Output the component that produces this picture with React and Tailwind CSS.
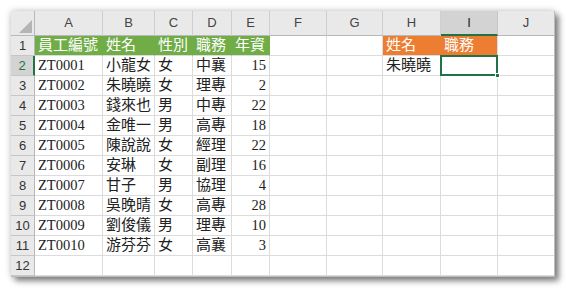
import React from "react";

const cols = ["A", "B", "C", "D", "E", "F", "G", "H", "I", "J"];

const rows = [
  ["ZT0001", "小龍女", "女", "中襄", "15"],
  ["ZT0002", "朱曉曉", "女", "理專", "2"],
  ["ZT0003", "錢來也", "男", "中專", "22"],
  ["ZT0004", "金唯一", "男", "高專", "18"],
  ["ZT0005", "陳說說", "女", "經理", "22"],
  ["ZT0006", "安琳", "女", "副理", "16"],
  ["ZT0007", "甘子", "男", "協理", "4"],
  ["ZT0008", "吳晚晴", "女", "高專", "28"],
  ["ZT0009", "劉俊儀", "男", "理專", "10"],
  ["ZT0010", "游芬芬", "女", "高襄", "3"],
];

const cellFont = { fontFamily: '"Liberation Serif", "Noto Sans CJK TC", serif' };
const uiFont = { fontFamily: '"Liberation Sans", "Noto Sans", sans-serif' };

function Cell({ children, cjk, className = "" }) {
  return (
    <div
      className={`h-[20px] border-r border-b border-[#dcdcdc] flex items-end pb-[1px] px-[3px] ${
        cjk ? "text-[15px]" : "text-[14.5px]"
      } leading-[18px] text-[#222] whitespace-nowrap overflow-hidden ${className}`}
      style={cellFont}
    >
      {children}
    </div>
  );
}

function RowHead({ n, active }) {
  return (
    <div
      className={`h-[20px] border-b flex items-center justify-center text-[13px] ${
        active
          ? "bg-[#d3d3d3] border-[#c6c6c6] border-r-2 border-r-[#217346] text-[#217346]"
          : "bg-[#e9e9e9] border-[#c6c6c6] border-r border-r-[#b8b8b8] text-[#333]"
      }`}
      style={uiFont}
    >
      {n}
    </div>
  );
}

export default function App() {
  return (
    <div className="w-[567px] h-[290px] bg-white pl-[11px] pt-[11px]">
      <div className="w-[544px] h-[266px] bg-white overflow-hidden border-r border-b border-[#bdbdbd] shadow-[0_0_7px_rgba(0,0,0,0.22),4px_4px_6px_rgba(0,0,0,0.45)]">
        <div className="grid grid-cols-[24px_68px_52px_38px_39px_38px_57px_56px_58px_57px_57px]">
          {/* header row */}
          <div className="h-[25px] bg-[#e9e9e9] border-r border-b border-[#b8b8b8] flex items-end justify-end p-[2px]">
            <svg width="13" height="13" viewBox="0 0 13 13">
              <polygon points="13,0 13,13 0,13" fill="#b5b5b5" />
            </svg>
          </div>
          {cols.map((c) => (
            <div
              key={c}
              className={`h-[25px] border-r flex items-center justify-center text-[13px] ${
                c === "I"
                  ? "bg-[#d3d3d3] border-[#c6c6c6] border-b-2 border-b-[#217346] text-[#222]"
                  : "bg-[#e9e9e9] border-[#cfcfcf] border-b border-b-[#b8b8b8] text-[#444]"
              }`}
              style={uiFont}
            >
              {c}
            </div>
          ))}

          {/* row 1 */}
          <RowHead n={1} />
          {["員工編號", "姓名", "性別", "職務", "年資"].map((t) => (
            <Cell key={t} cjk className="bg-[#70ad47] border-r-[#70ad47] text-white">
              {t}
            </Cell>
          ))}
          <Cell />
          <Cell />
          <Cell cjk className="bg-[#ed7d31] border-r-[#ed7d31] text-white">姓名</Cell>
          <Cell cjk className="bg-[#ed7d31] text-white">職務</Cell>
          <Cell />

          {/* data rows */}
          {rows.map((r, i) => (
            <React.Fragment key={r[0]}>
              <RowHead n={i + 2} active={i === 0} />
              <Cell>{r[0]}</Cell>
              <Cell cjk>{r[1]}</Cell>
              <Cell cjk>{r[2]}</Cell>
              <Cell cjk>{r[3]}</Cell>
              <Cell className="justify-end">{r[4]}</Cell>
              <Cell />
              <Cell />
              <Cell cjk>{i === 0 ? "朱曉曉" : ""}</Cell>
              {i === 0 ? (
                <div className="relative h-[20px] border-r border-b border-[#dcdcdc]">
                  <div className="absolute -left-[1px] -top-[1px] -right-[1px] -bottom-[1px] border-2 border-[#217346]" />
                  <div className="absolute -right-[3px] -bottom-[3px] w-[5px] h-[5px] bg-[#217346] border border-white" />
                </div>
              ) : (
                <Cell />
              )}
              <Cell />
            </React.Fragment>
          ))}

          {/* row 12 */}
          <RowHead n={12} />
          {cols.map((c) => (
            <Cell key={"r12" + c} />
          ))}
        </div>
      </div>
    </div>
  );
}
